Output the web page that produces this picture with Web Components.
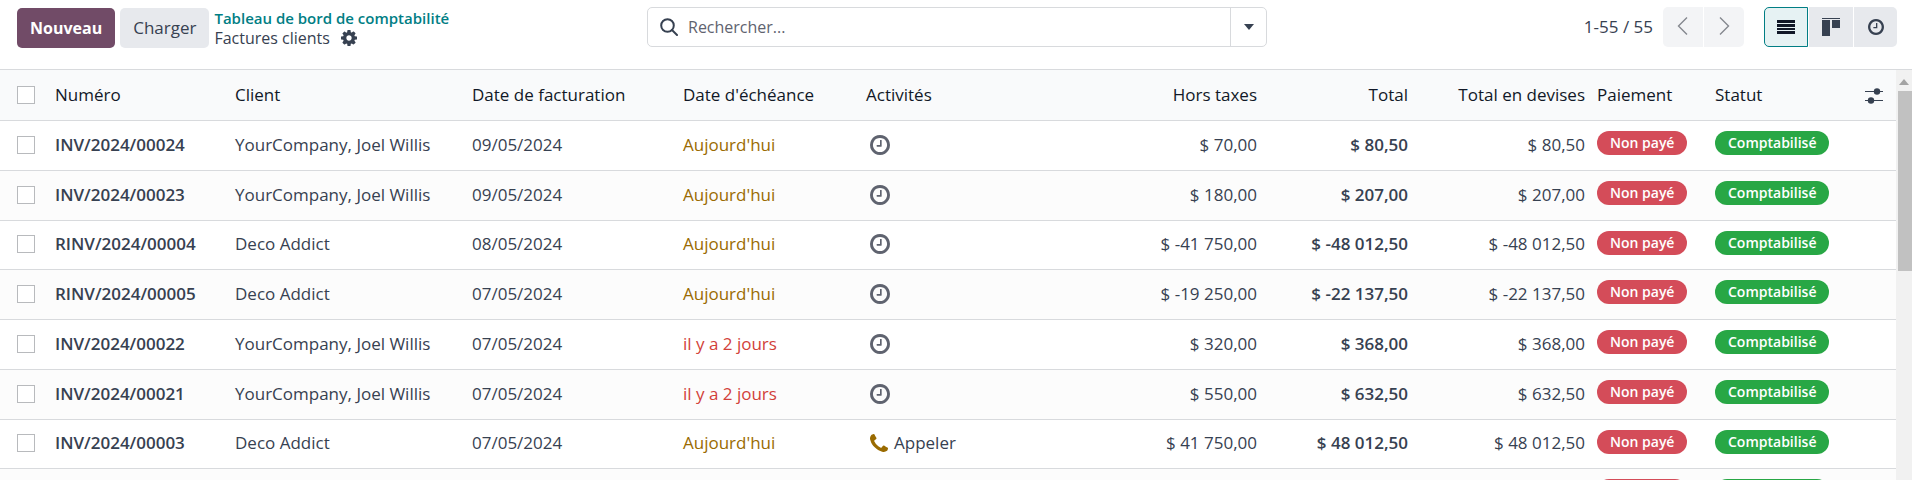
<!DOCTYPE html>
<html lang="fr">
<head>
<meta charset="utf-8">
<title>Factures clients</title>
<style>
html, body { height: 100%; }
body {
  margin: 0;
  font-family: "Open Sans", "Noto Sans", sans-serif;
  font-size: 17px;
  line-height: 24px;
  color: #374151;
  background: #fff;
  overflow: hidden;
}
</style>
</head>
<body>
<invoice-page></invoice-page>

<script>
const FA = {
  clock: ['0 128 1536 1536', 'M896 544v448q0 14-9 23t-23 9h-320q-14 0-23-9t-9-23v-64q0-14 9-23t23-9h224v-352q0-14 9-23t23-9h64q14 0 23 9t9 23zM1312 896q0-148-73-273t-198-198-273-73-273 73-198 198-73 273 73 273 198 198 273 73 273-73 198-198 73-273zM1536 896q0 209-103 385.5t-279.5 279.5-385.5 103-385.500-103-279.500-279.500-103-385.500 103-385.500 279.500-279.500 385.500-103 385.500 103 279.500 279.500 103 385.500z'],
  cog: ['0 128 1536 1536', 'M1024 896q0-106-75-181t-181-75-181 75-75 181 75 181 181 75 181-75 75-181zM1536 787v222q0 12-8 23t-20 13l-185 28q-19 54-39 91 35 50 107 138 10 12 10 25t-9 23q-27 37-99 108t-94 71q-12 0-26-9l-138-108q-44 23-91 38-16 136-29 186-7 28-36 28h-222q-14 0-24.500-8.500t-11.500-21.500l-28-184q-49-16-90-37l-141 107q-10 9-25 9-14 0-25-11-126-114-165-168-7-10-7-23 0-12 8-23 15-21 51-66.500t54-70.500q-27-50-41-99l-183-27q-13-2-21-12.500t-8-23.500v-222q0-12 8-23t19-13l186-28q14-46 39-92-40-57-107-138-10-12-10-24 0-10 9-23 26-36 98.500-107.500t94.500-71.500q13 0 26 10l138 107q44-23 91-38 16-136 29-186 7-28 36-28h222q14 0 24.500 8.500t11.500 21.500l28 184q49 16 90 37l142-107q9-9 24-9 13 0 25 10 129 119 165 170 7 8 7 22 0 12-8 23-15 21-51 66.500t-54 70.500q26 50 41 98l183 28q13 2 21 12.500t8 23.500z'],
  phone: ['0 128 1408 1408', 'M1408 1240q0 27-10 70.500t-21 68.500q-21 50-122 106-94 51-186 51-27 0-53-3.500t-57.500-12.500-47-14.500-55.500-20.500-49-18q-98-35-175-83-127-79-264-216t-216-264q-48-77-83-175-3-9-18-49t-20.500-55.500-14.500-47-12.500-57.500-3.500-53q0-92 51-186 56-101 106-122 25-11 68.500-21t70.500-10q14 0 21 3 18 6 53 76 11 19 30 54t35 63.500 31 53.500q3 4 17.500 25t21.500 35.500 7 28.500q0 20-28.500 50t-62 55-62 53-28.500 46q0 9 5 22.500t8.500 20.500 14 24 11.500 19q76 137 174 235t235 174q2 1 19 11.500t24 14 20.500 8.500 22.500 5q18 0 46-28.500t53-62 55-62 50-28.500q14 0 28.500 7t35.500 21.500 25 17.500q25 15 53.500 31t63.500 35 54 30q70 35 76 53 3 7 3 21z'],
};
const fa = name => `<svg viewBox="${FA[name][0]}"><path fill="currentColor" d="${FA[name][1]}"/></svg>`;
const ICONS = {
  clock: fa('clock'),
  cog: fa('cog'),
  phone: fa('phone'),
  search: '<svg viewBox="0 0 18 18" fill="none" stroke="currentColor" stroke-width="2"><circle cx="7.500" cy="7.500" r="6.300"/><path d="M12 12l5 5" stroke-linecap="round"/></svg>',
  caret: '<svg viewBox="0 0 10 10"><path d="M0 2h10l-5 6z" fill="currentColor"/></svg>',
  prev: '<svg viewBox="0 0 18 18" fill="none" stroke="currentColor" stroke-width="1.400"><path d="M13 .5L4.500 9l8.500 8.500"/></svg>',
  next: '<svg viewBox="0 0 18 18" fill="none" stroke="currentColor" stroke-width="1.400"><path d="M5 .5L13.500 9L5 17.500"/></svg>',
  list: '<svg viewBox="0 0 18 18"><path d="M0 2h18v3H0zM0 6h18v3H0zM0 10h18v2H0zM0 13h18v3H0z" fill="currentColor"/></svg>',
  kanban: '<svg viewBox="0 0 18 18"><path d="M0 0h18v1H0zM0 2h8v16H0zM10 2h8v8h-8z" fill="currentColor"/></svg>',
  sliders: '<svg viewBox="0 0 18 18" fill="currentColor"><path d="M0 4h18v1H0zM0 13h18v1H0z"/><circle cx="12" cy="4.500" r="3.200"/><circle cx="6" cy="13.500" r="3.200"/></svg>',
  up: '<svg viewBox="0 0 10 10"><path d="M0 8l5-6 5 6z" fill="currentColor"/></svg>',
};

class BaseElement extends HTMLElement {
  constructor() {
    super();
    this.attachShadow({ mode: 'open' });
  }
  connectedCallback() {
    this.shadowRoot.innerHTML = `<style>*{box-sizing:border-box}${this.css()}</style>${this.html()}`;
  }
}

customElements.define('ui-icon', class extends BaseElement {
  css() { return `
    :host { display: inline-block; flex: none; width: var(--size, 18px); height: var(--size, 18px); }
    svg { display: block; width: 100%; height: 100%; }`; }
  html() { return ICONS[this.getAttribute('name')]; }
});

customElements.define('ui-button', class extends BaseElement {
  css() { return `
    :host { display: block; }
    button { display: block; height: 40px; padding: 0 13px; border: 0; border-radius: 5px; font: inherit;
      font-weight: 500; color: #374151; background: #e7e9ed; }
    :host([primary]) button { font-size: 16px; font-weight: 700; color: #fff; background: #714b67; }`; }
  html() { return `<button type="button"><slot></slot></button>`; }
});

customElements.define('bread-crumb', class extends BaseElement {
  css() { return `
    :host { display: block; font-size: 16px; line-height: 20px; white-space: nowrap; }
    a { display: block; color: #017e84; font-size: 15px; font-weight: 600; text-decoration: none; }
    div { display: flex; align-items: center; gap: 11px; }
    button { display: flex; padding: 0; border: 0; background: none; color: #374151; --size: 16px; }`; }
  html() { return `
    <a href="#tableau">Tableau de bord de comptabilité</a>
    <div><span>Factures clients</span><button type="button" aria-label="Actions"><ui-icon name="cog"></ui-icon></button></div>`; }
});

customElements.define('search-bar', class extends BaseElement {
  css() { return `
    :host { display: flex; height: 40px; border: 1px solid #d8dadd; border-radius: 5px; overflow: hidden; font-size: 16px; }
    label { display: flex; flex: 1; align-items: center; gap: 10px; padding-left: 12px; }
    input { flex: 1; min-width: 0; padding: 0; border: 0; outline: 0; font: inherit; color: inherit; background: none; }
    input::placeholder { color: #5f636f; opacity: 1; }
    button { display: flex; align-items: center; justify-content: center; width: 36px; padding: 0; border: 0;
      border-left: 1px solid #d8dadd; background: none; color: #374151; --size: 10px; }`; }
  html() { return `
    <label><ui-icon name="search"></ui-icon><input type="text" placeholder="Rechercher..." aria-label="Rechercher"></label>
    <button type="button" aria-label="Filtres"><ui-icon name="caret"></ui-icon></button>`; }
});

customElements.define('page-pager', class extends BaseElement {
  css() { return `
    :host { display: flex; align-items: center; gap: 10px; white-space: nowrap; }
    div { display: flex; gap: 1px; border-radius: 5px; overflow: hidden; }
    button { display: flex; align-items: center; justify-content: center; width: 40px; height: 40px; padding: 0 0 3px;
      border: 0; background: #f3f4f6; color: #85888f; }`; }
  html() { return `
    <span>1-55 / 55</span>
    <div><button type="button" aria-label="Précédent"><ui-icon name="prev"></ui-icon></button><button type="button" aria-label="Suivant"><ui-icon name="next"></ui-icon></button></div>`; }
});

customElements.define('view-switcher', class extends BaseElement {
  css() { return `
    :host { display: flex; gap: 1px; }
    button { display: flex; align-items: center; justify-content: center; width: 44px; height: 40px; padding: 0;
      border: 0; background: #e7e9ed; color: #374151; }
    .active { border: 1px solid #017e84; border-radius: 5px 0 0 5px; background: #e6f2f3; color: #111827; }
    .last { width: 43px; border-radius: 0 5px 5px 0; --size: 16px; }`; }
  html() { return `
    <button type="button" class="active" aria-label="Liste"><ui-icon name="list"></ui-icon></button>
    <button type="button" aria-label="Kanban"><ui-icon name="kanban"></ui-icon></button>
    <button type="button" class="last" aria-label="Activité"><ui-icon name="clock"></ui-icon></button>`; }
});

customElements.define('control-panel', class extends BaseElement {
  css() { return `
    :host { display: grid; grid-template-columns: 1fr minmax(200px, 620px) 1fr; align-items: start;
      padding: 7px 15px 21px 17px; border-bottom: 1px solid #d8dadd; }
    .left { display: flex; align-items: center; gap: 5px; padding-top: 1px; }
    .right { display: flex; justify-content: flex-end; gap: 20px; }`; }
  html() { return `
    <div class="left"><ui-button primary>Nouveau</ui-button><ui-button>Charger</ui-button><bread-crumb></bread-crumb></div>
    <search-bar></search-bar>
    <div class="right"><page-pager></page-pager><view-switcher></view-switcher></div>`; }
});

customElements.define('status-badge', class extends BaseElement {
  css() { return `
    :host { display: inline-block; height: 24px; padding: 0 13px; border-radius: 12px; font-size: 14px; line-height: 24px;
      font-weight: 600; color: #fff; background: #d44c59; vertical-align: top; }
    :host([tone="success"]) { background: #28a745; }`; }
  html() { return `<slot></slot>`; }
});

const ROWS = [
  ['INV/2024/00024', 'YourCompany, Joel Willis', '09/05/2024', "Aujourd'hui", '', '$ 70,00', '$ 80,50'],
  ['INV/2024/00023', 'YourCompany, Joel Willis', '09/05/2024', "Aujourd'hui", '', '$ 180,00', '$ 207,00'],
  ['RINV/2024/00004', 'Deco Addict', '08/05/2024', "Aujourd'hui", '', '$ -41 750,00', '$ -48 012,50'],
  ['RINV/2024/00005', 'Deco Addict', '07/05/2024', "Aujourd'hui", '', '$ -19 250,00', '$ -22 137,50'],
  ['INV/2024/00022', 'YourCompany, Joel Willis', '07/05/2024', 'il y a 2 jours', '', '$ 320,00', '$ 368,00'],
  ['INV/2024/00021', 'YourCompany, Joel Willis', '07/05/2024', 'il y a 2 jours', '', '$ 550,00', '$ 632,50'],
  ['INV/2024/00003', 'Deco Addict', '07/05/2024', "Aujourd'hui", 'Appeler', '$ 41 750,00', '$ 48 012,50'],
];

customElements.define('invoice-table', class extends BaseElement {
  css() { return `
    :host { display: block; }
    table { width: 100%; border-collapse: separate; border-spacing: 0; table-layout: fixed; }
    th, td { height: 50px; padding: 0 6px 2px; border-bottom: 1px solid #d8dadd; text-align: left; font-weight: 400; white-space: nowrap; }
    th { height: 51px; padding-bottom: 0; font-weight: 500; color: #111827; background: #f9fafb; }
    tbody tr:nth-child(4n+3) td { height: 49px; }
    tbody tr:nth-child(even) { background: #fcfcfc; }
    .check { padding-left: 17px; }
    input { display: block; appearance: none; width: 18px; height: 18px; margin: 0; border: 1px solid #b8babd; background: #fff; }
    .num { text-align: right; }
    .strong { font-weight: 600; }
    .due { font-weight: 500; color: #9a6b01; }
    .late { color: #d23f3a; }
    td.badge { vertical-align: top; padding-top: 10px; }
    .activity { display: flex; align-items: center; gap: 6px; padding-left: 4px; }
    .activity button { display: flex; padding: 0; border: 0; background: none; color: #5f636f; --size: 20px; }
    .activity.call button { color: #9a6b01; --size: 18px; }
    .options { text-align: right; padding-right: 13px; }
    .options button { padding: 0; border: 0; background: none; color: #374151; vertical-align: middle; display: inline-flex; }`; }
  html() {
    const widths = ['49px', '180px', '237px', '211px', '183px', '', '180px', '151px', '177px', '118px', '138px', '49px'];
    return `<table>
      <colgroup>${widths.map(w => `<col${w ? ` style="width:${w}"` : ''}>`).join('')}</colgroup>
      <thead><tr>
        <th class="check"><input type="checkbox" aria-label="Tout sélectionner"></th>
        <th>Numéro</th><th>Client</th><th>Date de facturation</th><th>Date d'échéance</th><th>Activités</th>
        <th class="num">Hors taxes</th><th class="num">Total</th><th class="num">Total en devises</th>
        <th>Paiement</th><th>Statut</th>
        <th class="options"><button type="button" aria-label="Colonnes"><ui-icon name="sliders"></ui-icon></button></th>
      </tr></thead>
      <tbody>${ROWS.map(this.row).join('')}
        <tr><td colspan="9"></td>
          <td class="badge"><status-badge>Non payé</status-badge></td>
          <td class="badge"><status-badge tone="success">Comptabilisé</status-badge></td>
          <td></td></tr>
      </tbody></table>`;
  }
  row([number, client, date, due, activity, net, total]) {
    return `<tr>
      <td class="check"><input type="checkbox" aria-label="${number}"></td>
      <td class="strong">${number}</td><td>${client}</td><td>${date}</td>
      <td class="due${due.startsWith('il') ? ' late' : ''}">${due}</td>
      <td><div class="activity${activity ? ' call' : ''}"><button type="button" aria-label="Activité"><ui-icon name="${activity ? 'phone' : 'clock'}"></ui-icon></button>${activity ? `<span>${activity}</span>` : ''}</div></td>
      <td class="num">${net}</td><td class="num strong">${total}</td><td class="num">${total}</td>
      <td class="badge"><status-badge>Non payé</status-badge></td>
      <td class="badge"><status-badge tone="success">Comptabilisé</status-badge></td>
      <td></td></tr>`;
  }
});

customElements.define('scroll-rail', class extends BaseElement {
  css() { return `
    :host { display: flex; flex-direction: column; align-items: center; width: 16px; background: #f1f1f1; color: #a3a3a3; --size: 10px; }
    .up { display: flex; align-items: center; justify-content: center; height: 21px; padding-top: 2px; }
    .thumb { width: 14px; height: 44%; margin-left: 2px; background: #c1c1c1; }`; }
  html() { return `<div class="up"><ui-icon name="up"></ui-icon></div><div class="thumb"></div>`; }
});

customElements.define('invoice-page', class extends BaseElement {
  css() { return `
    :host { display: flex; flex-direction: column; height: 100%; }
    main { display: flex; flex: 1; min-height: 0; }
    .scroller { flex: 1; min-width: 0; overflow: hidden; }`; }
  html() { return `
    <control-panel></control-panel>
    <main><div class="scroller"><invoice-table></invoice-table></div><scroll-rail></scroll-rail></main>`; }
});
</script>
</body>
</html>
